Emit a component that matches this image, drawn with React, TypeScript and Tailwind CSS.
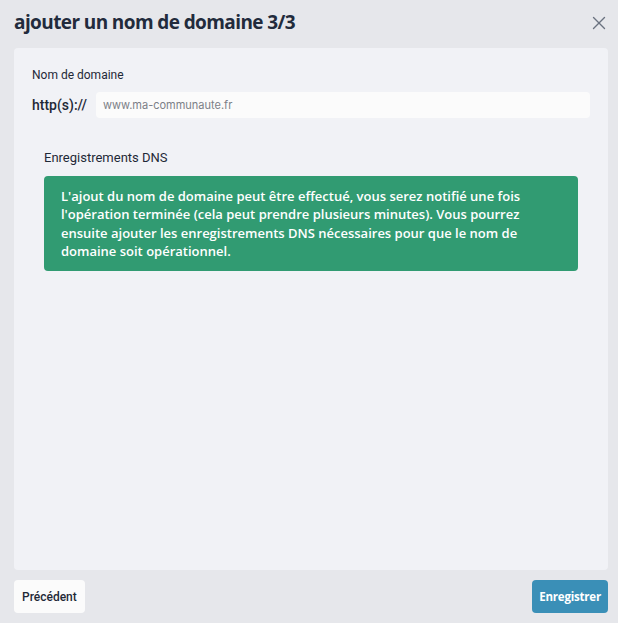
import { X } from 'lucide-react';

export default function App() {
  return (
    <div className="flex h-[623px] w-[618px] flex-col bg-[#e6e7eb] font-['Roboto',sans-serif] text-[#1f2937]">
      <header className="flex h-[48px] shrink-0 items-center justify-between pb-[3px] pl-[14px] pr-[8px]">
        <h1 className="font-['Open_Sans',sans-serif] text-[19px] font-bold tracking-[-0.6px] text-[#222b3c]">
          ajouter un nom de domaine 3/3
        </h1>
        <button className="text-[#6b7280]">
          <X size={22} strokeWidth={1.5} />
        </button>
      </header>

      <main className="ml-[14px] mr-[10px] flex-1 rounded-[4px] bg-[#f1f2f6] px-[18px] pt-[18px]">
        <label className="block text-[12px] text-[#1f2937]">Nom de domaine</label>
        <div className="mt-[8px] flex items-center gap-[9px]">
          <span className="text-[14px] font-medium text-[#1f2937]">http(s)://</span>
          <input
            className="h-[26px] flex-1 rounded-[4px] bg-[#fbfbfb] px-[7px] font-['Inter',sans-serif] text-[11px] outline-none placeholder:text-[#7b7f87]"
            placeholder="www.ma-communaute.fr"
          />
        </div>

        <div className="mx-[12px] mt-[30px]">
          <h2 className="text-[13px] text-[#1f2937]">Enregistrements DNS</h2>
          <div className="mt-[8px] rounded-[4px] bg-[#319b72] px-[17px] pb-[10px] pt-[11px] font-['Open_Sans',sans-serif] text-[13px] font-semibold leading-[18.5px] text-white">
            L'ajout du nom de domaine peut être effectué, vous serez notifié une fois l'opération
            terminée (cela peut prendre plusieurs minutes). Vous pourrez ensuite ajouter les
            enregistrements DNS nécessaires pour que le nom de domaine soit opérationnel.
          </div>
        </div>
      </main>

      <footer className="flex h-[53px] shrink-0 items-start justify-between pl-[14px] pr-[10px] pt-[10px]">
        <button className="h-[33px] rounded-[4px] bg-[#fbfbfb] px-[8px] text-[12px] font-medium text-[#1f2937]">
          Précédent
        </button>
        <button className="h-[33px] rounded-[4px] bg-[#3a8fb7] px-[7px] font-['Open_Sans',sans-serif] text-[11.5px] font-bold tracking-[-0.2px] text-white">
          Enregistrer
        </button>
      </footer>
    </div>
  );
}
